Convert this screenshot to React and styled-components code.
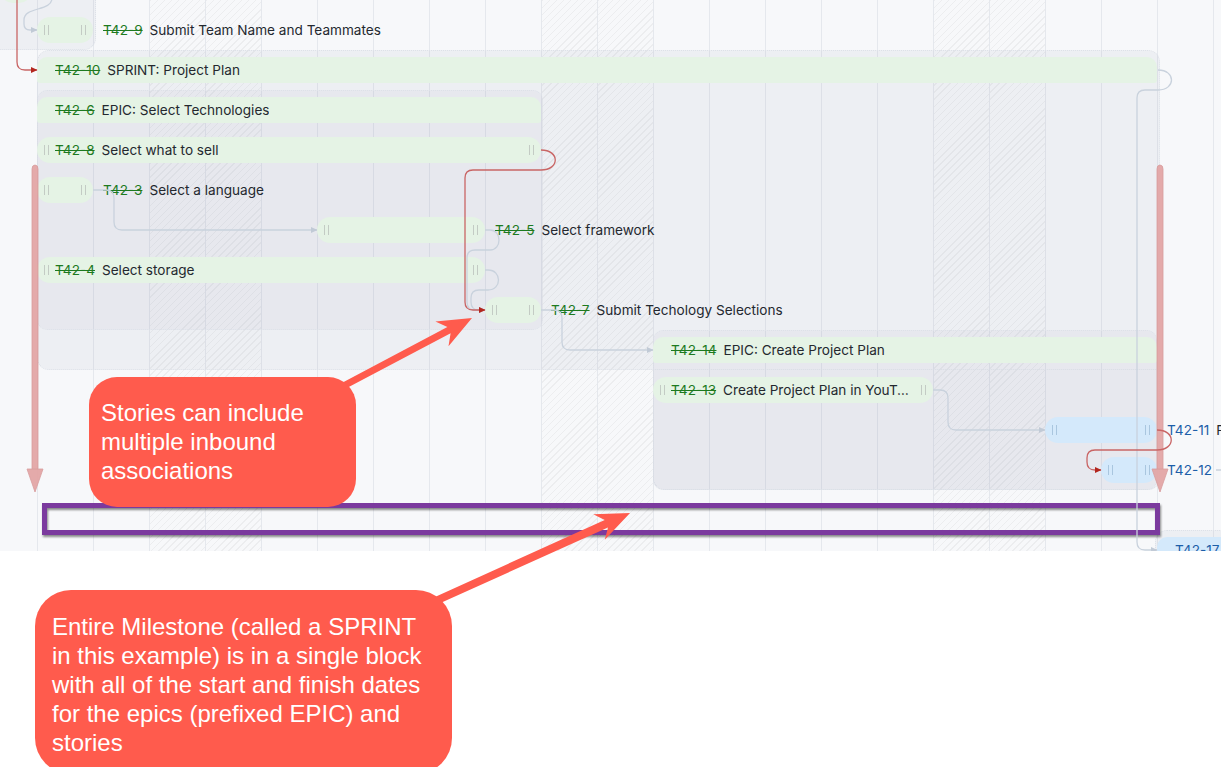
import React from "react";
import styled, { createGlobalStyle, css } from "styled-components";

const DAY = 56;
const ORIGIN = 37;
const dayX = (d) => ORIGIN + d * DAY;

const GlobalStyle = createGlobalStyle`
  html, body {
    margin: 0;
    padding: 0;
    background: #fff;
  }
  body {
    font-family: Inter, "Noto Sans", sans-serif;
  }
`;

const Page = styled.div`
  position: relative;
  width: 1221px;
  height: 767px;
  overflow: hidden;
  background: #fff;
`;

const Chart = styled.div`
  position: relative;
  height: 551px;
  overflow: hidden;
  background: #f7f8fa;
`;

const Columns = styled.div`
  position: absolute;
  inset: 0;
  display: flex;
  padding-left: ${ORIGIN}px;
`;

const Column = styled.div`
  flex: 0 0 ${DAY}px;
  box-sizing: border-box;
  border-left: 1px solid #e5e8ed;
  ${(p) =>
    p.$weekend &&
    css`
      background-image: repeating-linear-gradient(
        135deg,
        rgba(0, 0, 0, 0.045) 0 1px,
        transparent 1px 5px
      );
    `}
`;

const Group = styled.div`
  position: absolute;
  left: ${(p) => p.$x}px;
  top: ${(p) => p.$y}px;
  width: ${(p) => p.$w}px;
  height: ${(p) => p.$h}px;
  box-sizing: border-box;
  background: ${(p) =>
    p.$deep ? "rgba(120, 132, 156, 0.055)" : "rgba(120, 132, 156, 0.075)"};
  border: 1px dotted #dde1e8;
  ${(p) => p.$open && `border-${p.$open}: none;`}
  border-radius: ${(p) => p.$radius || "12px"};
`;

const Links = styled.svg`
  position: absolute;
  left: 0;
  top: 0;
  z-index: 1;
  overflow: visible;
  pointer-events: none;
`;

const Rows = styled.div`
  position: relative;
  display: flex;
  flex-direction: column;
  margin-top: -30px;
`;

const Row = styled.div`
  height: 40px;
  display: flex;
  align-items: center;
  padding-left: ${(p) => p.$offset}px;
  white-space: nowrap;
`;

const Bar = styled.div`
  flex: 0 0 ${(p) => p.$width}px;
  height: 26px;
  box-sizing: border-box;
  display: flex;
  align-items: center;
  padding: ${(p) => (p.$parent ? "0 0 0 18px" : "0 7px")};
  border-radius: ${(p) => (p.$parent ? "10px 10px 3px 3px" : "13px")};
  background: ${(p) => (p.$blue ? "#d4e9fb" : "#e5f3e5")};
  overflow: hidden;
`;

const Handle = styled.span`
  flex: none;
  width: 3px;
  height: 10px;
  border-left: 1px solid ${(p) => (p.$blue ? "#a9c6df" : "#c3cbc4")};
  border-right: 1px solid ${(p) => (p.$blue ? "#a9c6df" : "#c3cbc4")};
  ${(p) => p.$end && "margin-left: auto;"}
`;

const Label = styled.span`
  display: flex;
  align-items: baseline;
  min-width: 0;
  font-size: 13.6px;
  line-height: 18px;
  ${(p) => p.$inside && "flex: 1 1 auto; margin: 0 8px 0 6px;"}
  ${(p) => p.$outside && "margin-left: 10px;"}
`;

const Key = styled.span`
  flex: none;
  margin-right: 7px;
  color: ${(p) => (p.$blue ? "#1c5ea8" : "#1d7a1f")};
  text-decoration: ${(p) => (p.$blue ? "none" : "line-through")};
`;

const Title = styled.span`
  min-width: 0;
  color: #24282f;
  overflow: hidden;
  text-overflow: ellipsis;
`;

const Overlay = styled.svg`
  position: absolute;
  left: 0;
  top: 0;
  pointer-events: none;
`;

const Frame = styled.div`
  position: absolute;
  left: 42px;
  top: 503px;
  width: 1118px;
  height: 32px;
  box-sizing: border-box;
  border: 5px solid #7b3a9e;
  filter: drop-shadow(1px 2px 1px rgba(0, 0, 0, 0.45));
`;

const Callout = styled.div`
  position: absolute;
  left: ${(p) => p.$x}px;
  top: ${(p) => p.$y}px;
  width: ${(p) => p.$w}px;
  height: ${(p) => p.$h}px;
  box-sizing: border-box;
  padding: ${(p) => p.$pad};
  border-radius: ${(p) => p.$r}px;
  background: #ff5b4d;
  color: #fff;
  font-family: "Liberation Sans", Arial, sans-serif;
  font-size: 24px;
  line-height: 29px;
  white-space: nowrap;
`;

const weekends = [2, 3, 9, 10, 16, 17];

const tasks = [
  { stub: true },
  { key: "T42-9", title: "Submit Team Name and Teammates", start: 0, end: 1 },
  { key: "T42-10", title: "SPRINT: Project Plan", start: 0, end: 20, parent: true },
  { key: "T42-6", title: "EPIC: Select Technologies", start: 0, end: 9, parent: true },
  { key: "T42-8", title: "Select what to sell", start: 0, end: 9, inside: true },
  { key: "T42-3", title: "Select a language", start: 0, end: 1 },
  { key: "T42-5", title: "Select framework", start: 5, end: 8 },
  { key: "T42-4", title: "Select storage", start: 0, end: 8, inside: true },
  { key: "T42-7", title: "Submit Techology Selections", start: 8, end: 9 },
  { key: "T42-14", title: "EPIC: Create Project Plan", start: 11, end: 20, parent: true },
  { key: "T42-13", title: "Create Project Plan in YouTrack", start: 11, end: 16, inside: true },
  { key: "T42-11", title: "Finalize Project Plan", start: 18, end: 20, blue: true },
  { key: "T42-12", title: "", start: 19, end: 20, blue: true },
  null,
  { key: "T42-17", title: "SPRINT: Build", start: 20, end: 24, parent: true, blue: true },
];

const TaskLabel = ({ t, ...rest }) => (
  <Label {...rest}>
    <Key $blue={t.blue}>{t.key}</Key>
    {t.title && <Title>{t.title}</Title>}
  </Label>
);

const TaskRow = ({ t }) => {
  if (!t) return <Row $offset={0} />;
  if (t.stub)
    return (
      <Row $offset={0}>
        <Bar $width={32} />
      </Row>
    );
  const width = (t.end - t.start) * DAY;
  return (
    <Row $offset={dayX(t.start)}>
      <Bar $width={width} $parent={t.parent} $blue={t.blue}>
        {t.parent ? (
          <TaskLabel t={t} />
        ) : (
          <>
            <Handle $blue={t.blue} />
            {t.inside && <TaskLabel t={t} $inside />}
            <Handle $blue={t.blue} $end />
          </>
        )}
      </Bar>
      {!t.parent && !t.inside && <TaskLabel t={t} $outside />}
    </Row>
  );
};

const grayLinks = [
  "M52,-2 C52,12 24,6 24,20 L24,24 Q24,30 30,30 L37,30",
  "M1158,70 C1176,70 1176,90 1158,90 L1145,90 Q1137,90 1137,98 L1137,542 Q1137,550 1145,550 L1157,550",
  "M93,190 L106,190 Q114,190 114,198 L114,222 Q114,230 122,230 L317,230",
  "M485,230 L490,230 C502,230 502,250 490,250 L475,250 Q467,250 467,258 L467,302 Q467,310 475,310 L485,310",
  "M485,270 L488,270 C502,270 502,290 488,290 L479,290 Q471,290 471,298 L471,302 Q471,310 479,310 L485,310",
  "M541,310 L554,310 Q562,310 562,318 L562,342 Q562,350 570,350 L653,350",
  "M933,390 L940,390 Q948,390 948,398 L948,422 Q948,430 956,430 L1045,430",
];

const redLinks = [
  "M17,-2 L17,62 Q17,70 25,70 L37,70",
  "M541,150 C560,150 560,170 541,170 L473,170 Q465,170 465,178 L465,302 Q465,310 473,310 L485,310",
  "M1157,430 C1176,430 1176,450 1157,450 L1095,450 Q1087,450 1087,458 L1087,462 Q1087,470 1095,470 L1101,470",
];

const arrowPoints = (x1, y1, x2, y2, shaft, head, half, notch) => {
  const dx = x2 - x1;
  const dy = y2 - y1;
  const len = Math.hypot(dx, dy);
  const ux = dx / len;
  const uy = dy / len;
  const nx = -uy;
  const ny = ux;
  const bx = x2 - ux * head;
  const by = y2 - uy * head;
  const sx = x2 - ux * (head - notch);
  const sy = y2 - uy * (head - notch);
  const s = shaft / 2;
  const pts = [
    [x1 + nx * s, y1 + ny * s],
    [sx + nx * s, sy + ny * s],
    [bx + nx * half, by + ny * half],
    [x2, y2],
    [bx - nx * half, by - ny * half],
    [sx - nx * s, sy - ny * s],
    [x1 - nx * s, y1 - ny * s],
  ];
  return pts.map((p) => p.map((v) => v.toFixed(1)).join(",")).join(" ");
};

const DownArrow = ({ x }) => (
  <g fill="#e3a4a4" stroke="#d69696" strokeWidth="0.8" opacity="0.92">
    <path d={`M${x - 3},474 L${x - 3},169 Q${x - 3},165 ${x},165 Q${x + 3},165 ${x + 3},169 L${x + 3},474 Z`} />
    <path d={`M${x - 8},469 L${x + 8},469 L${x},492 Z`} />
  </g>
);

export default function App() {
  return (
    <Page>
      <GlobalStyle />
      <Chart>
        <Columns>
          {Array.from({ length: 22 }, (_, i) => (
            <Column key={i} $weekend={weekends.includes(i)} />
          ))}
        </Columns>

        <Group $x={-2} $y={-20} $w={98} $h={70} $radius="0 0 12px 0" />
        <Group $x={37} $y={50} $w={1123} $h={320} $radius="12px 12px 0 12px" />
        <Group $x={653} $y={370} $w={507} $h={120} $open="top" $radius="0 0 12px 12px" />
        <Group $x={37} $y={90} $w={506} $h={240} $deep $radius="10px" />
        <Group $x={653} $y={330} $w={504} $h={160} $deep $radius="10px" />
        <Group $x={1155} $y={530} $w={100} $h={60} $radius="12px 0 0 0" />

        <Links width="1221" height="551" viewBox="0 0 1221 551">
          <defs>
            <marker id="hg" markerUnits="userSpaceOnUse" markerWidth="7" markerHeight="7" refX="6" refY="3.5" orient="auto">
              <path d="M0,0.5 L6.5,3.5 L0,6.5 Z" fill="#c1cad6" />
            </marker>
            <marker id="hr" markerUnits="userSpaceOnUse" markerWidth="7" markerHeight="7" refX="6" refY="3.5" orient="auto">
              <path d="M0,0.5 L6.5,3.5 L0,6.5 Z" fill="#b3261e" />
            </marker>
          </defs>
          {grayLinks.map((d, i) => (
            <path key={i} d={d} fill="none" stroke="#c9d2dd" strokeWidth="1.3" markerEnd="url(#hg)" />
          ))}
          {redLinks.map((d, i) => (
            <path key={i} d={d} fill="none" stroke="#c96565" strokeWidth="1.3" markerEnd="url(#hr)" />
          ))}
          <path d="M1216,470 L1221,470" stroke="#c3ccd8" strokeWidth="1.3" />
        </Links>

        <Rows>
          {tasks.map((t, i) => (
            <TaskRow key={i} t={t} />
          ))}
        </Rows>
      </Chart>

      <Frame />

      <Overlay width="1221" height="767" viewBox="0 0 1221 767">
        <DownArrow x={35} />
        <DownArrow x={1160} />
        <polygon fill="#ff5b4d" points={arrowPoints(332, 392, 472, 318, 7, 34, 14, 8)} />
        <polygon fill="#ff5b4d" points={arrowPoints(420, 608, 630, 513, 8, 34, 14, 8)} />
      </Overlay>

      <Callout $x={89} $y={377} $w={267} $h={130} $r={28} $pad="21px 12px">
        Stories can include
        <br />
        multiple inbound
        <br />
        associations
      </Callout>

      <Callout $x={35} $y={590} $w={417} $h={184} $r={36} $pad="22px 17px">
        Entire Milestone (called a SPRINT
        <br />
        in this example) is in a single block
        <br />
        with all of the start and finish dates
        <br />
        for the epics (prefixed EPIC) and
        <br />
        stories
      </Callout>
    </Page>
  );
}
